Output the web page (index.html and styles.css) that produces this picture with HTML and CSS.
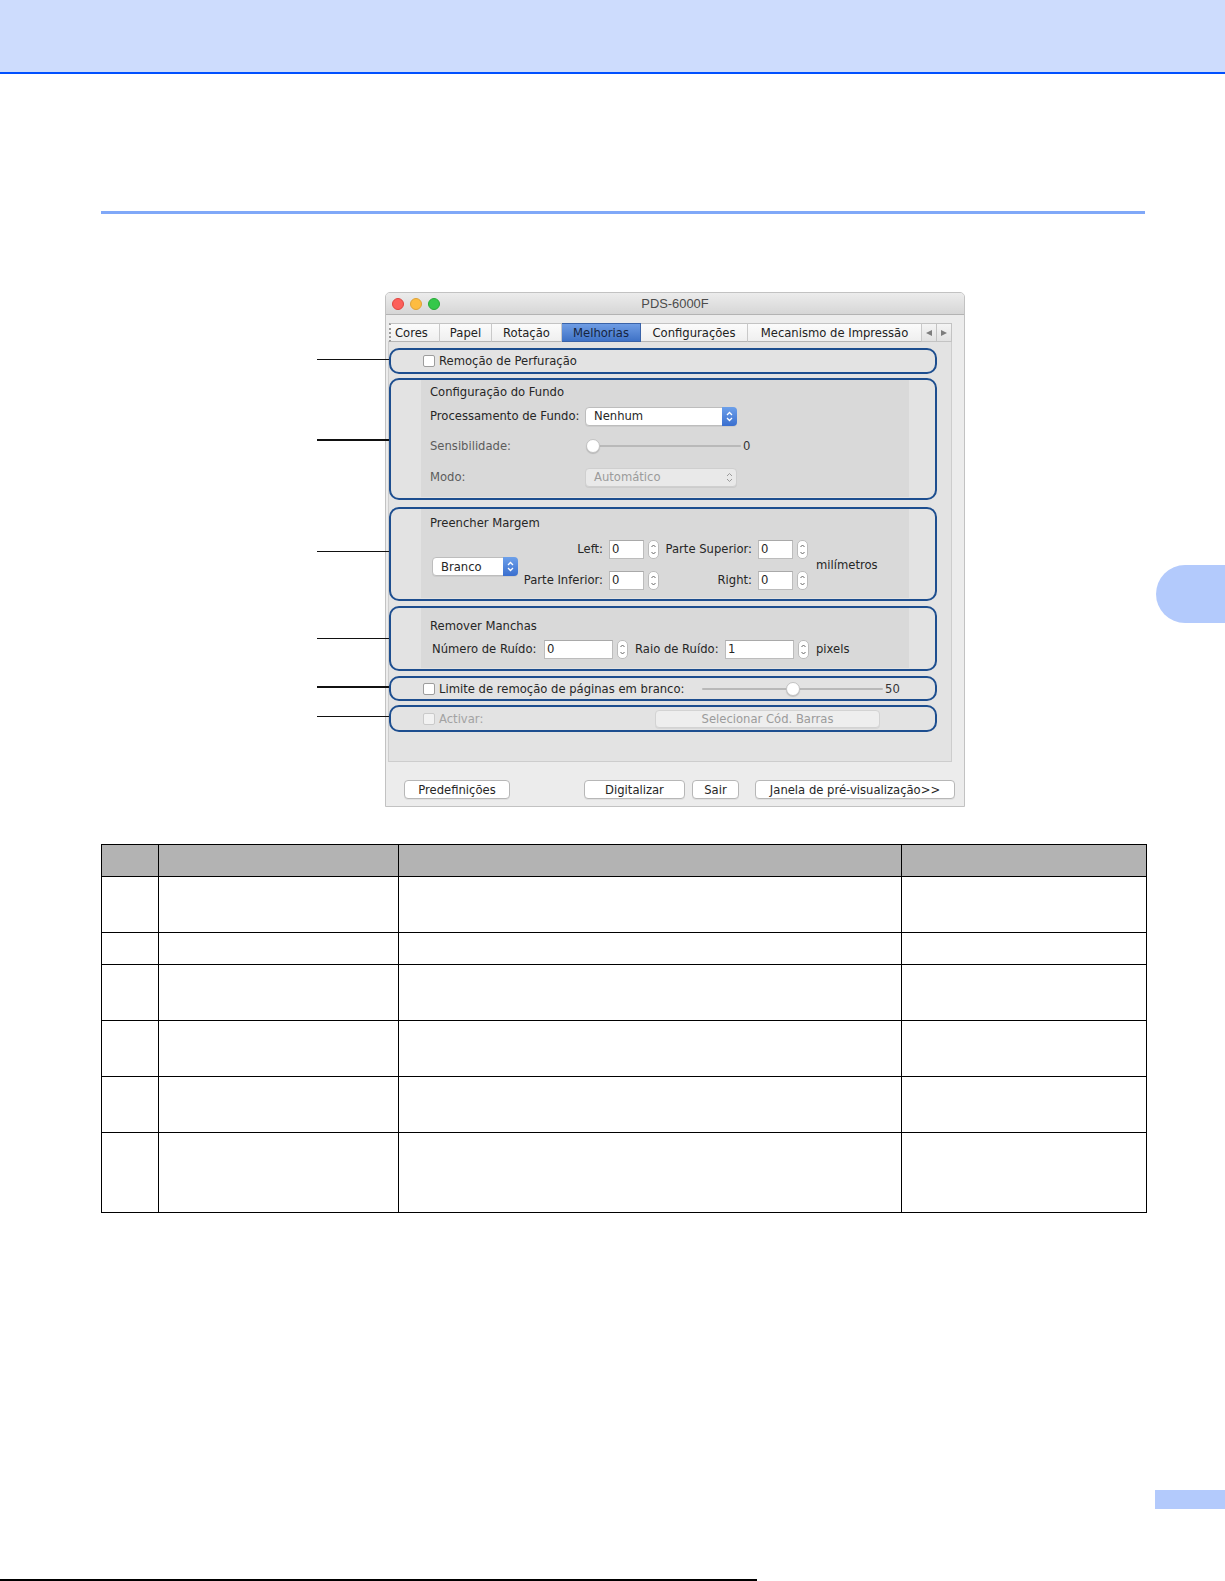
FILE: index.html
```html
<!DOCTYPE html>
<html lang="pt">
<head>
<meta charset="utf-8">
<title>PDS-6000F</title>
<link rel="stylesheet" href="styles.css">
</head>
<body>
<div class="page">
  <header class="band"></header>
  <div class="rule"></div>

  <div class="figure-row">
    <div class="window">
      <div class="titlebar">
        <div class="lights">
          <span class="light red"></span><span class="light yellow"></span><span class="light green"></span>
        </div>
        <div class="title">PDS-6000F</div>
        <div class="tb-spacer"></div>
      </div>

      <div class="wbody">
        <div class="tabs">
          <span class="tab t-cores">Cores</span>
          <span class="tab t-papel">Papel</span>
          <span class="tab t-rot">Rotação</span>
          <span class="tab t-mel active">Melhorias</span>
          <span class="tab t-conf">Configurações</span>
          <span class="tab t-mec">Mecanismo de Impressão</span>
          <span class="tab-arrow"><svg width="8" height="8" viewBox="0 0 8 8"><path d="M7 1 L1 4 L7 7 Z" fill="#7d7d7d"/></svg></span>
          <span class="tab-arrow"><svg width="8" height="8" viewBox="0 0 8 8"><path d="M1 1 L7 4 L1 7 Z" fill="#7d7d7d"/></svg></span>
        </div>

        <div class="pane">
          <section class="sec sec1">
            <span class="check"></span><span class="lbl">Remoção de Perfuração</span>
          </section>

          <section class="sec sec2">
            <div class="group g2">
              <div class="gtitle">Configuração do Fundo</div>
              <div class="row r-proc">
                <span class="rlabel">Processamento de Fundo:</span>
                <span class="select sel-nenhum">Nenhum
                  <span class="sel-arrow"><svg width="15" height="19" viewBox="0 0 15 19"><path d="M5 8 L7.5 5.5 L10 8 M5 11 L7.5 13.5 L10 11" fill="none" stroke="#fff" stroke-width="1.3"/></svg></span>
                </span>
              </div>
              <div class="row r-sens">
                <span class="rlabel dim">Sensibilidade:</span>
                <span class="slider s-sens"><span class="track"></span><span class="knob"></span></span>
                <span class="sval">0</span>
              </div>
              <div class="row r-modo">
                <span class="rlabel dim">Modo:</span>
                <span class="select sel-dis">Automático
                  <span class="sel-arrow dis"><svg width="15" height="19" viewBox="0 0 15 19"><path d="M5 8 L7.5 5.5 L10 8 M5 11 L7.5 13.5 L10 11" fill="none" stroke="#9a9a9a" stroke-width="1"/></svg></span>
                </span>
              </div>
            </div>
          </section>

          <section class="sec sec3">
            <div class="group g3">
              <div class="gtitle">Preencher Margem</div>
              <div class="margin-row">
                <span class="select sel-branco">Branco
                  <span class="sel-arrow"><svg width="15" height="19" viewBox="0 0 15 19"><path d="M5 8 L7.5 5.5 L10 8 M5 11 L7.5 13.5 L10 11" fill="none" stroke="#fff" stroke-width="1.3"/></svg></span>
                </span>
                <div class="fields">
                  <div class="frow">
                    <span class="flabel fa">Left:</span><span class="input in-s">0</span>
                    <span class="spin"><svg width="9" height="17" viewBox="0 0 9 17"><path d="M2.5 6 L4.5 4 L6.5 6 M2.5 11 L4.5 13 L6.5 11" fill="none" stroke="#666" stroke-width="1"/></svg></span>
                    <span class="flabel fb">Parte Superior:</span><span class="input in-s">0</span>
                    <span class="spin"><svg width="9" height="17" viewBox="0 0 9 17"><path d="M2.5 6 L4.5 4 L6.5 6 M2.5 11 L4.5 13 L6.5 11" fill="none" stroke="#666" stroke-width="1"/></svg></span>
                  </div>
                  <div class="frow">
                    <span class="flabel fa">Parte Inferior:</span><span class="input in-s">0</span>
                    <span class="spin"><svg width="9" height="17" viewBox="0 0 9 17"><path d="M2.5 6 L4.5 4 L6.5 6 M2.5 11 L4.5 13 L6.5 11" fill="none" stroke="#666" stroke-width="1"/></svg></span>
                    <span class="flabel fb">Right:</span><span class="input in-s">0</span>
                    <span class="spin"><svg width="9" height="17" viewBox="0 0 9 17"><path d="M2.5 6 L4.5 4 L6.5 6 M2.5 11 L4.5 13 L6.5 11" fill="none" stroke="#666" stroke-width="1"/></svg></span>
                  </div>
                </div>
                <span class="unit">milímetros</span>
              </div>
            </div>
          </section>

          <section class="sec sec4">
            <div class="group g4">
              <div class="gtitle">Remover Manchas</div>
              <div class="row r-noise">
                <span class="nlabel n1">Número de Ruído:</span><span class="input in-l">0</span>
                <span class="spin"><svg width="9" height="17" viewBox="0 0 9 17"><path d="M2.5 6 L4.5 4 L6.5 6 M2.5 11 L4.5 13 L6.5 11" fill="none" stroke="#666" stroke-width="1"/></svg></span>
                <span class="nlabel n2">Raio de Ruído:</span><span class="input in-l">1</span>
                <span class="spin"><svg width="9" height="17" viewBox="0 0 9 17"><path d="M2.5 6 L4.5 4 L6.5 6 M2.5 11 L4.5 13 L6.5 11" fill="none" stroke="#666" stroke-width="1"/></svg></span>
                <span class="unit px">pixels</span>
              </div>
            </div>
          </section>

          <section class="sec sec5">
            <span class="check"></span><span class="lbl blank-lbl">Limite de remoção de páginas em branco:</span>
            <span class="slider s-blank"><span class="track"></span><span class="knob"></span></span>
            <span class="sval">50</span>
          </section>

          <section class="sec sec6">
            <span class="check dis"></span><span class="lbl dis act-lbl">Activar:</span>
            <span class="btn btn-dis">Selecionar Cód. Barras</span>
          </section>
        </div>

        <div class="buttons">
          <span class="btn b-pre">Predefinições</span>
          <span class="btn b-dig">Digitalizar</span>
          <span class="btn b-sair">Sair</span>
          <span class="btn b-jan">Janela de pré-visualização&gt;&gt;</span>
        </div>
      </div>
    </div>
    <div class="sidetab"></div>
  </div>

  <table class="info">
    <colgroup>
      <col class="c1"><col class="c2"><col class="c3"><col class="c4">
    </colgroup>
    <tr class="hd"><th></th><th></th><th></th><th></th></tr>
    <tr class="r1"><td></td><td></td><td></td><td></td></tr>
    <tr class="r2"><td></td><td></td><td></td><td></td></tr>
    <tr class="r3"><td></td><td></td><td></td><td></td></tr>
    <tr class="r4"><td></td><td></td><td></td><td></td></tr>
    <tr class="r5"><td></td><td></td><td></td><td></td></tr>
    <tr class="r6"><td></td><td></td><td></td><td></td></tr>
  </table>

  <footer class="foot">
    <div class="pagenum"></div>
    <div class="footline"></div>
  </footer>
</div>
</body>
</html>
```

FILE: styles.css
```css
* { box-sizing: border-box; }
html, body { margin: 0; padding: 0; }
body {
  background: #fff;
  font-family: "DejaVu Sans", "Liberation Sans", sans-serif;
  color: #262626;
}
.page {
  width: 1225px;
  height: 1581px;
  overflow: hidden;
  display: flex;
  flex-direction: column;
}

/* page chrome */
.band {
  flex: none;
  height: 74px;
  background: #cddcfd;
  border-bottom: 2px solid #0050ff;
}
.rule {
  flex: none;
  margin: 137px 0 0 101px;
  width: 1044px;
  height: 3px;
  background: #80a8f8;
}
.figure-row {
  flex: none;
  display: flex;
  align-items: flex-start;
  margin-top: 78px;
}
.sidetab {
  margin-left: auto;
  margin-top: 273px;
  width: 69px;
  height: 58px;
  background: #b3cafc;
  border-radius: 29px 0 0 29px;
}

/* window */
.window {
  margin-left: 385px;
  width: 580px;
  height: 515px;
  background: #ececec;
  border: 1px solid #c2c2c2;
  border-radius: 5px 5px 0 0;
  display: flex;
  flex-direction: column;
  font-size: 11.6px;
}
.titlebar {
  flex: none;
  height: 22px;
  background: linear-gradient(#ececec, #d6d6d6);
  border-bottom: 1px solid #b3b3b3;
  border-radius: 4px 4px 0 0;
  display: grid;
  grid-template-columns: 1fr auto 1fr;
  align-items: center;
}
.lights { display: flex; gap: 6px; margin-left: 6px; }
.light { width: 12px; height: 12px; border-radius: 50%; }
.red { background: #fc605b; border: 1px solid #e0443e; }
.yellow { background: #fdbc40; border: 1px solid #dea236; }
.green { background: #34c84a; border: 1px solid #27aa35; }
.title {
  font-family: "Liberation Sans", Arial, sans-serif;
  font-size: 12.9px;
  color: #4c4c4c;
}
.wbody {
  flex: 1;
  display: flex;
  flex-direction: column;
  padding: 8px 12px 0 2px;
}

/* tabs */
.tabs {
  display: flex;
  height: 19px;
  margin-left: 1px;
  position: relative;
  z-index: 1;
}
.tab {
  display: flex;
  align-items: center;
  justify-content: center;
  height: 19px;
  background: linear-gradient(#fbfbfb, #efefef);
  border-top: 1px solid #c3c3c3;
  border-bottom: 1px solid #b5b5b5;
  border-right: 1px solid #c9c9c9;
  color: #222;
  white-space: nowrap;
}
.t-cores { width: 51px; border-left: 2px dotted #999; justify-content: flex-start; padding-left: 4px; }
.t-papel { width: 52px; }
.t-rot { width: 70px; }
.t-mel { width: 79px; }
.t-conf { width: 107px; }
.t-mec { width: 174px; }
.tab.active {
  background: linear-gradient(#6f9de4, #3f72c6);
  border-color: #3a63a8;
  color: #15243f;
}
.tab-arrow {
  width: 15px;
  height: 19px;
  display: flex;
  align-items: center;
  justify-content: center;
  background: linear-gradient(#f4f4f4, #e2e2e2);
  border: 1px solid #c3c3c3;
  border-left: none;
}

/* pane */
.pane {
  flex: none;
  height: 421px;
  margin-top: -1px;
  background: #e3e3e3;
  border: 1px solid #cdcdcd;
  display: flex;
  flex-direction: column;
}
.sec {
  position: relative;
  flex: none;
  width: 548px;
  border: 2px solid #1d4e8f;
  border-radius: 10px;
}
.sec::before {
  content: "";
  position: absolute;
  right: calc(100% + 2px);
  width: 72px;
  height: 1px;
  background: #111;
}
.sec1 { margin-top: 6px; height: 26px; display: flex; align-items: center; padding-left: 32px; }
.sec1::before { top: 9px; }
.sec2 { margin-top: 4px; height: 122px; }
.sec2::before { top: 59px; height: 2px; }
.sec3 { margin-top: 7px; height: 94px; }
.sec3::before { top: 42px; }
.sec4 { margin-top: 5px; height: 65px; }
.sec4::before { top: 30px; }
.sec5 { margin-top: 5px; height: 25px; display: flex; align-items: center; padding-left: 32px; }
.sec5::before { top: 8px; height: 2px; }
.sec6 { margin-top: 4px; height: 27px; display: flex; align-items: center; padding-left: 32px; }
.sec6::before { top: 9px; }

.check {
  width: 12px;
  height: 12px;
  background: #fff;
  border: 1px solid #9d9d9d;
  border-radius: 2px;
  flex: none;
}
.check.dis { background: #f2f2f2; border-color: #cacaca; }
.lbl { margin-left: 4px; white-space: nowrap; flex: none; }
.lbl.dis { color: #a2a2a2; }

.group {
  margin-left: 30px;
  width: 488px;
  background: #d9d9d9;
  padding-left: 9px;
}
.g2 { height: 117px; padding-top: 4px; }
.g3 { height: 89px; padding-top: 6px; }
.g4 { height: 60px; padding-top: 10px; }
.gtitle { line-height: 16px; height: 16px; white-space: nowrap; }

.row { display: flex; align-items: center; height: 20px; white-space: nowrap; }
.r-proc { margin-top: 6px; }
.r-sens { margin-top: 10px; }
.r-modo { margin-top: 11px; }
.rlabel { width: 155px; flex: none; }
.dim { color: #5c5c5c; }

.select {
  display: flex;
  align-items: center;
  height: 19px;
  background: #fff;
  border: 1px solid #bdbdbd;
  border-radius: 4px;
  padding-left: 8px;
  flex: none;
  box-shadow: 0 1px 0 rgba(0,0,0,0.06);
}
.sel-nenhum { width: 152px; }
.sel-dis { width: 152px; background: #e9e9e9; border-color: #cfcfcf; color: #9b9b9b; }
.sel-branco { width: 86px; margin-left: 2px; margin-top: 4px; }
.sel-arrow {
  margin-left: auto;
  width: 15px;
  height: 19px;
  margin-top: -1px;
  margin-bottom: -1px;
  margin-right: -1px;
  background: linear-gradient(#6da0ea, #3a6fcf);
  border-radius: 0 4px 4px 0;
  display: flex;
}
.sel-arrow.dis { background: transparent; }

.slider { position: relative; display: block; height: 16px; flex: none; }
.s-sens { width: 155px; margin-left: 1px; }
.s-blank { width: 181px; margin-left: 18px; }
.track {
  position: absolute;
  left: 0; right: 0; top: 7px;
  height: 2px;
  background: #b9b9b9;
  border-radius: 1px;
}
.knob {
  position: absolute;
  top: 1px;
  width: 14px;
  height: 14px;
  border-radius: 50%;
  background: #fff;
  border: 1px solid #c3c3c3;
  box-shadow: 0 1px 1px rgba(0,0,0,0.15);
}
.s-sens .knob { left: 0; }
.s-blank .knob { left: 84px; }
.sval { margin-left: 2px; color: #333; }

.margin-row { display: flex; align-items: center; margin-top: 8px; }
.fields { display: flex; flex-direction: column; gap: 11px; }
.frow { display: flex; align-items: center; height: 20px; white-space: nowrap; }
.flabel { text-align: right; flex: none; }
.fa { width: 85px; }
.fb { width: 93px; }
.input {
  height: 19px;
  background: #fff;
  border: 1px solid #bcbcbc;
  border-top-color: #a9a9a9;
  padding-left: 2px;
  display: flex;
  align-items: center;
  flex: none;
  margin-left: 6px;
}
.in-s { width: 35px; }
.in-l { width: 69px; }
.spin {
  width: 11px;
  height: 19px;
  margin-left: 4px;
  background: #fff;
  border: 1px solid #bcbcbc;
  border-radius: 5px;
  display: flex;
  align-items: center;
  justify-content: center;
  flex: none;
}
.unit { margin-left: 8px; white-space: nowrap; }
.unit.px { margin-left: 7px; }

.r-noise { margin-top: 5px; }
.nlabel { flex: none; white-space: nowrap; }
.n1 { width: 106px; margin-left: 2px; }
.n2 { width: 84px; margin-left: 7px; }

.blank-lbl { width: 245px; }
.act-lbl { width: 216px; }

.btn {
  display: flex;
  align-items: center;
  justify-content: center;
  height: 19px;
  background: #fff;
  border: 1px solid #b7b7b7;
  border-radius: 4px;
  white-space: nowrap;
  flex: none;
  box-shadow: 0 1px 0 rgba(0,0,0,0.05);
}
.btn-dis { width: 225px; height: 18px; background: #eeeeee; border-color: #d3d3d3; color: #9b9b9b; }

.buttons { display: flex; margin-top: 18px; }
.b-pre { width: 106px; margin-left: 16px; }
.b-dig { width: 101px; margin-left: 74px; }
.b-sair { width: 47px; margin-left: 7px; }
.b-jan { width: 200px; margin-left: 16px; }

/* table */
.info {
  flex: none;
  margin: 37px 0 0 101px;
  width: 1045px;
  border-collapse: collapse;
  table-layout: fixed;
}
.info th, .info td { border: 1px solid #000; padding: 0; }
.info th { background: #b3b3b3; }
.c1 { width: 57px; }
.c2 { width: 240px; }
.c3 { width: 503px; }
.c4 { width: 245px; }
.hd { height: 32px; }
.r1 { height: 56px; }
.r2 { height: 32px; }
.r3 { height: 56px; }
.r4 { height: 56px; }
.r5 { height: 56px; }
.r6 { height: 80px; }

/* footer */
.foot { flex: none; display: flex; flex-direction: column; }
.pagenum {
  margin-top: 277px;
  margin-left: 1155px;
  width: 70px;
  height: 19px;
  background: #b3cafc;
}
.footline {
  margin-top: 70px;
  width: 757px;
  height: 2px;
  background: #000;
}
```
